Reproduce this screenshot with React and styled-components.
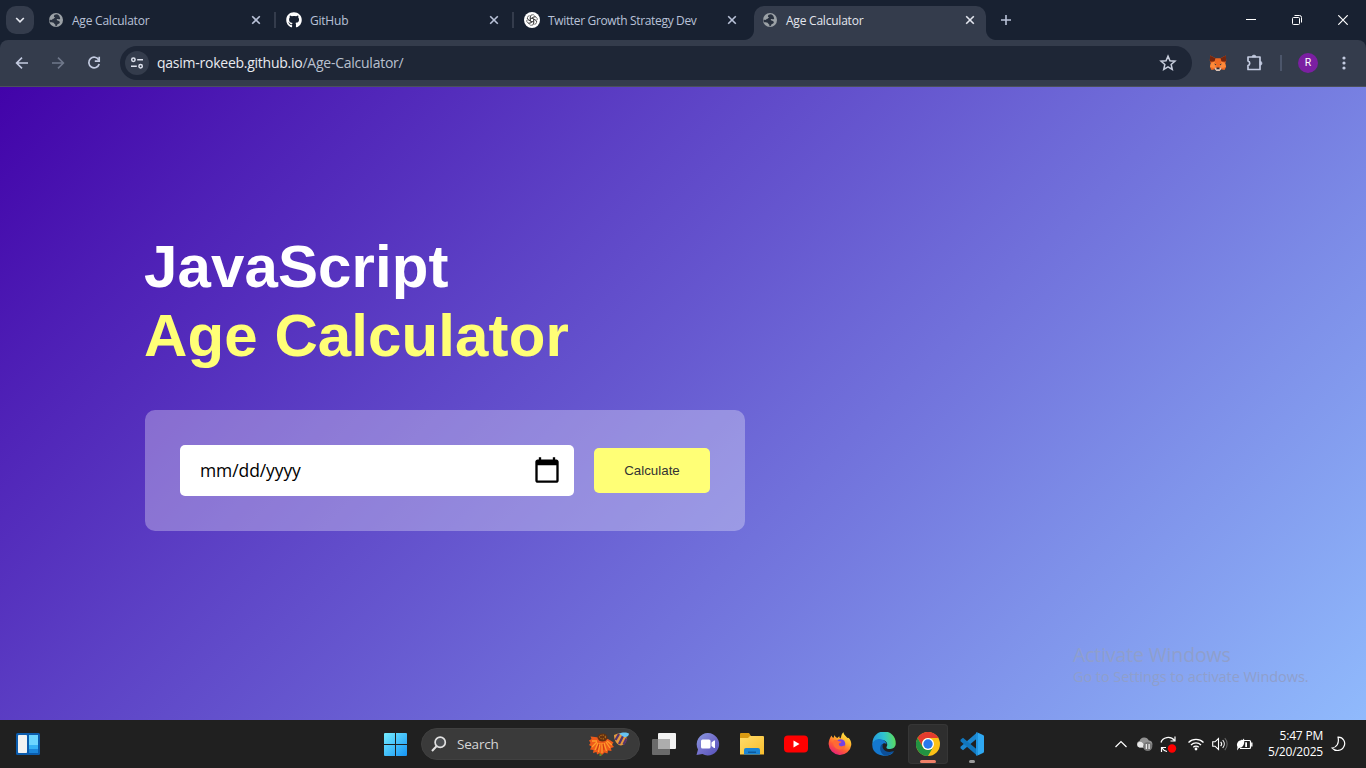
import React from "react";
import styled, { createGlobalStyle } from "styled-components";
import { FaGithub } from "react-icons/fa";

const ui = `"Open Sans", "Noto Sans", sans-serif`;

const GlobalStyle = createGlobalStyle`
  * { box-sizing: border-box; }
  body { margin: 0; overflow: hidden; background: #182131; }
  svg { display: block; flex: none; }
`;

const Screen = styled.div`
  width: 1366px;
  height: 768px;
  display: flex;
  flex-direction: column;
  overflow: hidden;
`;

/* ---------- browser chrome ---------- */

const TabStrip = styled.div`
  height: 40px;
  flex: none;
  display: flex;
  align-items: flex-start;
  padding-left: 6px;
  background: #182131;
  font-family: ${ui};
`;

const TabSearch = styled.div`
  width: 28px;
  height: 28px;
  margin: 6px 6px 0 0;
  border-radius: 10px;
  background: #343c4c;
  display: grid;
  place-items: center;
`;

const Tab = styled.div`
  position: relative;
  width: 232px;
  height: 34px;
  margin: 6px 6px 0 0;
  padding: 0 10px 6px 8px;
  display: flex;
  align-items: center;
  gap: 8px;
  border-radius: 10px 10px 0 0;
  color: ${(p) => (p.$active ? "#e3e6ee" : "#b9c2d8")};
  background: ${(p) => (p.$active ? "#343c4c" : "transparent")};

  &::before,
  &::after {
    content: "";
    display: ${(p) => (p.$active ? "block" : "none")};
    position: absolute;
    bottom: 0;
    width: 10px;
    height: 10px;
  }
  &::before {
    left: -10px;
    background: radial-gradient(circle at 0 0, transparent 9.5px, #343c4c 10.5px);
  }
  &::after {
    right: -10px;
    background: radial-gradient(circle at 100% 0, transparent 9.5px, #343c4c 10.5px);
  }
`;

const TabTitle = styled.span`
  flex: 1;
  font-size: 12px;
  line-height: 16px;
  white-space: nowrap;
  letter-spacing: ${(p) => p.$track || "-0.22px"};
  padding-top: 1px;
`;

const TabDivider = styled.div`
  width: 2px;
  height: 16px;
  margin: 12px 2px 0 -4px;
  background: #343c4c;
`;

const NewTab = styled.div`
  width: 28px;
  height: 28px;
  margin-top: 6px;
  display: grid;
  place-items: center;
`;

const WindowButtons = styled.div`
  margin-left: auto;
  display: flex;
`;

const WindowButton = styled.div`
  width: 46px;
  height: 40px;
  display: grid;
  place-items: center;
`;

const Toolbar = styled.div`
  height: 47px;
  flex: none;
  display: flex;
  align-items: center;
  padding: 0 4px;
  background: #343c4c;
  border-radius: 8px 8px 0 0;
  border-bottom: 1px solid #4b505b;
  font-family: ${ui};
`;

const ToolButton = styled.div`
  width: 36px;
  height: 34px;
  flex: none;
  display: grid;
  place-items: center;
`;

const Omnibox = styled.div`
  width: 1072px;
  height: 34px;
  flex: none;
  margin: 0 8px;
  padding: 0 15px 0 5px;
  display: flex;
  align-items: center;
  border-radius: 17px;
  background: #1e2636;
`;

const SiteInfo = styled.div`
  width: 24px;
  height: 24px;
  margin-right: 8px;
  border-radius: 50%;
  background: #343c4c;
  display: grid;
  place-items: center;
`;

const Url = styled.span`
  flex: 1;
  font-size: 14px;
  line-height: 20px;
  letter-spacing: -0.25px;
  color: #e8eaf0;
`;

const UrlPath = styled.span`
  color: #b9c0cf;
`;

const ToolDivider = styled.div`
  width: 2px;
  height: 16px;
  margin: 0 8px;
  background: #4c566b;
`;

const Avatar = styled.div`
  width: 20px;
  height: 20px;
  border-radius: 50%;
  background: #7b1fa2;
  color: #fff;
  font: 10.5px/20px Roboto, sans-serif;
  text-align: center;
`;

/* ---------- page ---------- */

const Page = styled.main`
  position: relative;
  flex: 1;
  padding: 145px 0 0 145px;
  background: linear-gradient(135deg, #4203a9, #90bafc);
  font-family: "Liberation Sans", Arial, sans-serif;
`;

const Heading = styled.h1`
  margin: 0 0 0 -1px;
  font-size: 60px;
  line-height: 69px;
  font-weight: 700;
  letter-spacing: 0.1px;
  color: #fff;
  white-space: nowrap;
`;

const Accent = styled.span`
  display: block;
  color: #ffff76;
`;

const InputBox = styled.div`
  width: 600px;
  height: 121px;
  margin-top: 40px;
  padding: 35px;
  display: flex;
  align-items: center;
  gap: 20px;
  border-radius: 10px;
  background: rgba(255, 255, 255, 0.3);
`;

const DateField = styled.div`
  flex: 1;
  height: 51px;
  padding: 0 13px 0 20px;
  display: flex;
  align-items: center;
  justify-content: space-between;
  border-radius: 5px;
  background: #fff;
  color: #000;
  font-family: ${ui};
  font-size: 17.5px;
`;

const DateText = styled.span`
  padding-bottom: 2px;
  letter-spacing: -0.1px;
`;

const PickerIcon = styled.span`
  padding-bottom: 2px;
`;

const CalculateButton = styled.button`
  width: 116px;
  height: 45px;
  padding: 0;
  border: 0;
  border-radius: 5px;
  background: #ffff76;
  color: #333;
  font: 13.333px "Liberation Sans", Arial, sans-serif;
`;

const Watermark = styled.div`
  position: absolute;
  left: 1073px;
  top: 555px;
  color: #8f9fcc;
  font-family: ${ui};
  white-space: nowrap;
`;

const WatermarkTitle = styled.div`
  font-size: 19.5px;
  line-height: 26px;
  letter-spacing: -0.15px;
`;

const WatermarkNote = styled.div`
  font-size: 14.5px;
  line-height: 17px;
  letter-spacing: -0.06px;
`;

/* ---------- taskbar ---------- */

const Taskbar = styled.footer`
  height: 48px;
  flex: none;
  display: flex;
  align-items: center;
  background: #202020;
  font-family: ${ui};
`;

const Widgets = styled.div`
  width: 375px;
  padding-left: 16px;
`;

const AppButton = styled.div`
  position: relative;
  width: 40px;
  height: 40px;
  margin-right: 4px;
  display: grid;
  place-items: center;
  border-radius: 4px;
  background: ${(p) => (p.$active ? "#2e2e2e" : "transparent")};
  box-shadow: ${(p) => (p.$active ? "inset 0 0 0 1px #363636" : "none")};

  &::after {
    content: "";
    display: ${(p) => (p.$bar ? "block" : "none")};
    position: absolute;
    bottom: 1px;
    left: calc(50% - ${(p) => (p.$bar || 0) / 2}px);
    width: ${(p) => p.$bar || 0}px;
    height: 3px;
    border-radius: 2px;
    background: ${(p) => (p.$active ? "#f08068" : "#9a9a9a")};
  }
`;

const SearchBox = styled.div`
  width: 219px;
  height: 32px;
  margin: 0 4px 0 2px;
  padding: 0 9px 0 9px;
  display: flex;
  align-items: center;
  border-radius: 16px;
  background: #3a3a3a;
  border: 1px solid #404040;
  color: #d6d6d6;
  font-size: 13.5px;
`;

const SearchLabel = styled.span`
  flex: 1;
  margin-left: 10px;
  padding-bottom: 1px;
  letter-spacing: -0.2px;
`;

const Tray = styled.div`
  margin-left: auto;
  display: flex;
  align-items: center;
  padding-right: 20px;
`;

const TrayIcon = styled.div`
  width: ${(p) => p.$w}px;
  display: grid;
  place-items: center;
`;

const Clock = styled.div`
  width: 64px;
  margin-right: 8px;
  color: #fff;
  font-size: 12px;
  line-height: 16px;
  letter-spacing: -0.2px;
  text-align: right;
  white-space: nowrap;
`;

/* ---------- icons ---------- */

const Globe = () => (
  <svg width="16" height="16" viewBox="0 0 16 16">
    <circle cx="8" cy="8" r="7" fill="#9ba1a6" />
    <path
      d="M8.800 2.200C7.300 2.200 5.800 3.100 5.900 4.400c.1.900 1.300.9 1.200 1.500-.1.800-1.500.5-2.100.9-.8.500-.9 1.200-1.800 1.200-.6 0-1.100-.4-1.700-.5-.1 1.100.1 2 .5 2.700 1 .2 2.300 0 3.200.4.900.4.8 1.300 1.600 1.700.8.300.7 1 .5 1.900 1.200.1 1.900-.6 2-1.500.1-1 1.300-.9 1.900-1.300.7-.500.8-1.300.3-1.900-.7-.8-2-.8-2.600-1.500-.5-.7.100-1.100.9-1.100 1 0 1.700.5 2.400.1C12.200 5.800 11.200 2.500 8.800 2.200z"
      fill="#29313f"
    />
  </svg>
);

const GptMark = () => (
  <svg width="16" height="16" viewBox="0 0 16 16">
    <circle cx="8" cy="8" r="8" fill="#fff" />
    <g fill="none" stroke="#333" strokeWidth=".65">
      {[0, 60, 120, 180, 240, 300].map((a) => (
        <path key={a} transform={`rotate(${a} 8 8)`} d="M6.400 9V5a2.300 2.300 0 0 1 4.200-1.300M6.400 6.900l3.400-2a2.300 2.300 0 0 1 2.200 0" />
      ))}
    </g>
  </svg>
);

const Cross = ({ color }) => (
  <svg width="12" height="12" viewBox="0 0 12 12" stroke={color} strokeWidth="1.6">
    <path d="M2.200 2.200l7.600 7.600M9.800 2.200l-7.600 7.600" />
  </svg>
);

const ArrowLeft = ({ color, flip }) => (
  <svg width="16" height="16" viewBox="0 0 16 16" fill="none" stroke={color} strokeWidth="1.6" transform={flip ? "scale(-1 1)" : undefined}>
    <path d="M14 8H3M8 2.600L2.600 8L8 13.400" />
  </svg>
);

const Reload = () => (
  <svg width="16" height="16" viewBox="0 0 16 16" fill="none" stroke="#c3cbe0" strokeWidth="1.7">
    <path d="M12.800 5A5.300 5.300 0 1 0 13.200 9" />
    <path d="M13.200 1.800V6.200H8.800" />
  </svg>
);

const Tune = () => (
  <svg width="14" height="14" viewBox="0 0 14 14" fill="none" stroke="#dfe3ee" strokeWidth="1.5">
    <circle cx="3.4" cy="3.8" r="1.7" />
    <path d="M7.200 3.800H13M1 10.200H6.800" />
    <circle cx="10.6" cy="10.2" r="1.7" />
  </svg>
);

const Star = () => (
  <svg width="18" height="18" viewBox="0 0 24 24" fill="none" stroke="#c8cedd" strokeWidth="2">
    <path d="M12 2.800l2.600 6.200 6.700.6-5.100 4.400 1.500 6.500L12 17.100l-5.700 3.400 1.500-6.500-5.100-4.400 6.700-.6z" />
  </svg>
);

const Fox = () => (
  <svg width="18" height="18" viewBox="0 0 18 18">
    <path d="M1.200 1.500l5.300 2.800h5l5.300-2.800.4 5-1 3 .8 3.500-1.500 3-3.500-.8-1.500 1.800h-3L6 15.200l-3.500.8L1 13l.8-3.500-1-3z" fill="#f06a22" />
    <path d="M1.200 1.500L6.500 4.300 5.500 7.500 1.500 7.800.8 6.500zM16.800 1.500L11.500 4.300l1 3.200 4 .3.700-1.300z" fill="#74260f" />
    <path d="M1.800 9.500L5.500 7.500 7.500 12 4.500 14 1 13zM16.200 9.500L12.500 7.500 10.500 12l3 2 3.500-1z" fill="#ff8a3a" />
    <path d="M5 9.600l2.200.7-.4 1.200zM13 9.600l-2.200.7.4 1.200z" fill="#2f3440" />
    <path d="M5.500 13.200L7.500 14h3l2-.8-.6 2.300-1.400 1.400h-3l-1.400-1.400z" fill="#d8c6bb" />
    <path d="M7.700 13.600h2.600l.3 1.600H7.400z" fill="#2d2833" />
  </svg>
);

const Puzzle = () => (
  <svg width="20" height="20" viewBox="0 0 20 20" fill="none" stroke="#c3cbe0" strokeWidth="1.7" strokeLinejoin="round">
    <path d="M4 4H16V16.500H4V12.600A2.400 2.400 0 0 0 4 8z" />
    <path d="M8 4a2 2 0 0 1 4 0zM16 8.300a2 2 0 0 1 0 4z" fill="#c3cbe0" strokeWidth=".6" />
  </svg>
);

const Calendar = () => (
  <svg width="28" height="28" viewBox="0 0 24 24" fill="#000">
    <path d="M20 3h-1V1h-2v2H7V1H5v2H4c-1.100 0-2 .9-2 2v16c0 1.100.9 2 2 2h16c1.100 0 2-.9 2-2V5c0-1.100-.9-2-2-2zm0 18H4V8h16v13z" />
  </svg>
);

const WidgetsIcon = () => (
  <svg width="24" height="22" viewBox="0 0 24 22">
    <rect width="24" height="22" rx="1.5" fill="#0b5cad" />
    <rect x="2" y="2" width="9" height="18" rx=".8" fill="#f2f2f2" />
    <rect x="13" y="2" width="9" height="10" fill="#6cd5ff" />
    <rect x="13" y="12" width="9" height="4" fill="#35b1f5" />
    <rect x="13" y="16" width="9" height="4" fill="#1b86dc" />
  </svg>
);

const StartIcon = () => (
  <svg width="23" height="23" viewBox="0 0 23 23">
    <defs>
      <linearGradient id="win" x1="0" y1="0" x2="23" y2="23" gradientUnits="userSpaceOnUse">
        <stop stopColor="#74ecff" />
        <stop offset="1" stopColor="#1594f5" />
      </linearGradient>
    </defs>
    <path d="M1 0h10v11H0V1a1 1 0 0 1 1-1zM12 0h10a1 1 0 0 1 1 1v10H12zM0 12h11v11H1a1 1 0 0 1-1-1zM12 12h11v10a1 1 0 0 1-1 1H12z" fill="url(#win)" />
  </svg>
);

const Magnifier = () => (
  <svg width="16" height="16" viewBox="0 0 16 16" fill="none" stroke="#e2e2e2" strokeWidth="1.7">
    <circle cx="9.2" cy="6.3" r="5.1" fill="#4c4f52" />
    <path d="M5.500 10.200L1 15" strokeWidth="2" />
  </svg>
);

const Flower = () => (
  <svg width="42" height="24" viewBox="0 0 42 24">
    <path d="M12.500 17v7" stroke="#5f8a26" strokeWidth="2" />
    <path
      d="M7 5L2.500 4.500 3.500 7 1 8.500 2.500 11 1 13 3.500 14.500 2 17.500 5.500 18 5 21 8.500 20 9 22.500 12 21 14 23 16.500 20.500 19.500 21.500 20 18.500 23.500 19 23 16 26 15 24 12.500 25.500 10.500 22.500 8.500 20 7z"
      fill="#ee5a1a"
    />
    <path d="M9 9l-5 0M9 10l-5 5M10 11l-3 7M12 11l-1.500 9M14 11v10M16 11l2.500 8M18 10l4 6M19 9l5 4" stroke="#ff9d2a" strokeWidth="1.3" />
    <path d="M11 12l-2 6M15 12l1 6" stroke="#c52f12" strokeWidth=".8" />
    <ellipse cx="14.5" cy="5.5" rx="5" ry="4" fill="#65300f" />
    <ellipse cx="14.5" cy="5" rx="3" ry="1.9" fill="none" stroke="#b6731d" strokeWidth="1.1" strokeDasharray="1.3 1" />
    <path d="M26 3c4-2.500 9-2 12 1 2 4.500-1 8.500-5 9.500-4-.5-7-5-7-10.500z" fill="#e69a3e" />
    <path d="M27.500 8l3.500-6M31 12l4.500-9M35.500 12.500l3-6" stroke="#53346e" strokeWidth="2.3" />
    <path d="M31 1.500C34 0 39 0 41 1.500 41 4.500 38 6 35 4.500z" fill="#67c3f2" />
  </svg>
);

const TaskView = () => (
  <svg width="24" height="24" viewBox="0 0 24 24">
    <rect x="6" y="1" width="18" height="16" rx="1" fill="#f2f2f2" />
    <rect x="0" y="7" width="18" height="16" rx="1" fill="#6a6a6a" />
    <path d="M6 7h12v10H6z" fill="#adadad" />
  </svg>
);

const Chat = () => (
  <svg width="24" height="24" viewBox="0 0 24 24">
    <defs>
      <linearGradient id="chat" x1="0" y1="0" x2="1" y2="1">
        <stop stopColor="#8a9ade" />
        <stop offset=".5" stopColor="#7470cc" />
        <stop offset="1" stopColor="#5350b8" />
      </linearGradient>
    </defs>
    <path d="M12 1a11.200 11.200 0 1 1-5.500 21L.5 23l1.500-5.500A11.200 11.200 0 0 1 12 1z" fill="url(#chat)" />
    <rect x="5" y="7.500" width="9.500" height="9" rx="1.5" fill="#fff" />
    <path d="M15.500 10.500l2.500-2h1v7.500h-1l-2.500-2z" fill="#fff" />
  </svg>
);

const Folder = () => (
  <svg width="24" height="24" viewBox="0 0 24 24">
    <defs>
      <linearGradient id="folder" x1="0" y1="0" x2="1" y2="1">
        <stop stopColor="#ffdc6b" />
        <stop offset="1" stopColor="#f8bd2d" />
      </linearGradient>
    </defs>
    <path d="M0 2a1 1 0 0 1 1-1h8l2 3v5H0z" fill="#d99a12" />
    <path d="M0 6h8l2-2h13a1 1 0 0 1 1 1v17.500H0z" fill="url(#folder)" />
    <path d="M4 22.500V18a2 2 0 0 1 2-2h12a2 2 0 0 1 2 2v4.500z" fill="#1a84d4" />
    <path d="M8 19.500h8v1.500H8z" fill="#0c5a9e" />
  </svg>
);

const YouTube = () => (
  <svg width="24" height="18" viewBox="0 0 24 18">
    <rect y=".5" width="24" height="17" rx="4" fill="#f00" />
    <path d="M9.500 5.400v7.200L15.500 9z" fill="#fff" />
  </svg>
);

const Firefox = () => (
  <svg width="24" height="24" viewBox="0 0 24 24">
    <defs>
      <linearGradient id="ff" x1=".8" y1="0" x2=".2" y2="1">
        <stop stopColor="#fff04a" />
        <stop offset=".35" stopColor="#ffb02c" />
        <stop offset=".65" stopColor="#ff5a36" />
        <stop offset="1" stopColor="#e31587" />
      </linearGradient>
    </defs>
    <path d="M3.500 3.500c.3 1 .7 1.700 1.500 2.300l.8-.3.500-2.500C6.800 4.500 8 5.300 9.500 6c.3-.9 1.300-1.600 2-1.800-.3 1 0 1.800 1 2.300C13.700 4.500 13 2 15.500.300c0 2 1.500 3.200 3 4.700.8.900 1.500 1.200 2 .7C22.500 7.500 23.500 10 23.300 13A11.400 11.400 0 0 1 .600 12C.7 9 1.800 6 3.500 3.500z" fill="url(#ff)" />
    <circle cx="12.5" cy="12" r="4.8" fill="#7542e5" />
    <path d="M5.500 8.500c2-.9 4-.5 5.500.8l2.500.3c0 1-1.500 1.500-2.500 2-.8 1.800 1 3.200 3 2.700 1.500-.3 2.600-1 3.500-.6-.9 3-4 4.300-7 3.600-4.500-1-6-5-5-8.800z" fill="#ff6a35" />
  </svg>
);

const Edge = () => (
  <svg width="24" height="24" viewBox="0 0 24 24">
    <defs>
      <linearGradient id="edgeTop" x1="0" y1=".5" x2="1" y2=".4">
        <stop stopColor="#2499de" />
        <stop offset=".5" stopColor="#2fc3d0" />
        <stop offset="1" stopColor="#5cdc5a" />
      </linearGradient>
    </defs>
    <path d="M.500 11A11.600 11.600 0 0 1 23.700 11c.3 3.500-2 6-5.500 6-3 0-4.200-1-3.600-2.200 2-3.800-1-6.800-4.800-6.800C5 8 1.500 10 .500 14z" fill="url(#edgeTop)" />
    <path d="M.400 13C1 8.500 5 6.500 9 7.200c3.500.6 5.500 3 5.600 5.300-.8-1.100-2-1.500-3.200-1-3 1.500-3 6.500 1 9 2.500 1.500 5 1.600 9.500-1-2.500 4-7.800 5.200-12.500 3.800C3.500 22 0 18 .400 13z" fill="#1478cf" />
    <path d="M9.500 12.500c-2.500 3-1.500 8.500 3 11 3.500.3 7-1.200 9.800-4.800-3 1.500-7.300 1.800-9.800-.4-1.800-1.600-2.400-3.700-1.600-5.800z" fill="#0c4f98" />
  </svg>
);

const Chrome = () => (
  <svg width="24" height="24" viewBox="0 0 24 24">
    <circle cx="12" cy="12" r="12" fill="#fbc116" />
    <path d="M1.600 6A12 12 0 0 1 22.400 6H12a6 6 0 0 0-5.200 9z" fill="#e33b2e" />
    <path d="M1.600 6l5.200 9a6 6 0 0 0 10.400 0L12 24A12 12 0 0 1 1.600 6z" fill="#229342" />
    <circle cx="12" cy="12" r="6" fill="#fff" />
    <circle cx="12" cy="12" r="4.7" fill="#2878ec" />
  </svg>
);

const VsCode = () => (
  <svg width="24" height="24" viewBox="0 0 24 24">
    <path d="M17 .5v6L3 18.300.500 16.300v-1.600z" fill="#1c86cf" />
    <path d="M17 23.500v-6L3 5.700.500 7.700v1.600z" fill="#1176bd" />
    <path d="M17 .3l6 2.600c.6.300 1 .8 1 1.500v15.200c0 .7-.4 1.200-1 1.500l-6 2.600c.6-.6 1-.9 1-1.700V2c0-.8-.4-1.200-1-1.700z" fill="#2fa8f2" />
    <path d="M17 .3c.6.500 1 .9 1 1.700v20c0 .8-.4 1.100-1 1.700-.5 0-1-.4-1-1V1.300c0-.6.500-1 1-1z" fill="#1e93de" />
  </svg>
);

const Chevron = () => (
  <svg width="12" height="8" viewBox="0 0 12 8" fill="none" stroke="#fff" strokeWidth="1.2">
    <path d="M.500 7L6 1.500 11.500 7" />
  </svg>
);

const Cloud = () => (
  <svg width="17" height="16" viewBox="0 0 17 16">
    <path d="M4 11.500A3.300 3.300 0 0 1 3.500 5 5 5 0 0 1 12.800 4.500 3.600 3.600 0 0 1 14 11.500z" fill="#929292" />
    <path d="M3.500 11.500A3 3 0 0 1 3.500 5.700C6 5.500 8 7.500 9 11.500z" fill="#e8e8e8" />
    <circle cx="11.7" cy="10.5" r="4.6" fill="#777" />
    <path d="M10.300 8v5M13.100 8v5" stroke="#fff" strokeWidth="1.1" />
  </svg>
);

const Sync = () => (
  <svg width="17" height="17" viewBox="0 0 17 17" fill="none" stroke="#fff" strokeWidth="1.2">
    <path d="M1 6.500C2.500 1 10.500-.5 14.500 4.500M15 .5V5h-4.500M7 15.500C5 15 3 13.700 2 12M1.500 16V11.500H6" />
    <circle cx="12" cy="12.5" r="4.2" fill="#f00" stroke="none" />
  </svg>
);

const Wifi = () => (
  <svg width="16" height="14" viewBox="0 0 16 14" fill="none" stroke="#fff" strokeWidth="1.3">
    <path d="M.500 5.500a10.600 10.600 0 0 1 15 0M3 8a7.100 7.100 0 0 1 10 0M5.300 10.300a3.800 3.800 0 0 1 5.400 0" />
    <circle cx="8" cy="12" r="1.4" fill="#fff" stroke="none" />
  </svg>
);

const Speaker = () => (
  <svg width="16" height="14" viewBox="0 0 16 14" fill="none" stroke="#fff" strokeWidth="1.1">
    <path d="M.700 4.800H3L6.500 1.500v11L3 9.200H.700zM8.700 4.800a3.300 3.300 0 0 1 0 4.400M10.700 3a6 6 0 0 1 0 8" />
    <path d="M12.800 1a8.800 8.800 0 0 1 0 12" stroke="#666" />
  </svg>
);

const Battery = () => (
  <svg width="17" height="13" viewBox="0 0 17 13">
    <path d="M6 2.500h7.500a1 1 0 0 1 1 1v6a1 1 0 0 1-1 1H4" fill="none" stroke="#fff" strokeWidth="1.2" />
    <path d="M15.800 4.500v4" stroke="#fff" strokeWidth="1.4" />
    <path d="M9.200 4.300h1.800v4.600H9.200z" fill="#fff" />
    <path d="M8 .5C9 5.500 7.500 10 3 10L1 12.500 1.500 9C-.5 5.500 3 2 4.500 2.500L5.500 1.500 6 2.500z" fill="#fff" />
  </svg>
);

const Moon = () => (
  <svg width="15" height="16" viewBox="0 0 15 16" fill="none" stroke="#fff" strokeWidth="1.2">
    <path d="M7 1.200c5.500-.2 8 5.300 5.900 9.300-2.200 4.700-8.500 5.300-11.700 1.500C5.500 11.300 8.500 7.500 7 1.200z" />
  </svg>
);

/* ---------- screen ---------- */

const tabs = [
  { title: "Age Calculator", icon: <Globe /> },
  { title: "GitHub", icon: <FaGithub size={16} color="#fff" /> },
  { title: "Twitter Growth Strategy Dev", icon: <GptMark />, track: "-0.34px" },
  { title: "Age Calculator", icon: <Globe />, active: true },
];

const apps = [
  { name: "tasks", icon: <TaskView /> },
  { name: "chat", icon: <Chat /> },
  { name: "files", icon: <Folder /> },
  { name: "youtube", icon: <YouTube /> },
  { name: "firefox", icon: <Firefox /> },
  { name: "edge", icon: <Edge /> },
  { name: "chrome", icon: <Chrome />, active: true, bar: 16 },
  { name: "code", icon: <VsCode />, bar: 6 },
];

export default function App() {
  return (
    <Screen>
      <GlobalStyle />
      <TabStrip>
        <TabSearch>
          <svg width="10" height="8" viewBox="0 0 10 8" fill="none" stroke="#e3e6ee" strokeWidth="1.7">
            <path d="M1.200 2L5 5.800 8.800 2" />
          </svg>
        </TabSearch>
        {tabs.map((tab, i) => (
          <React.Fragment key={i}>
            <Tab $active={tab.active}>
              {tab.icon}
              <TabTitle $track={tab.track}>{tab.title}</TabTitle>
              <Cross color={tab.active ? "#e3e6ee" : "#b9c2d8"} />
            </Tab>
            {i < 2 && <TabDivider />}
          </React.Fragment>
        ))}
        <NewTab>
          <svg width="12" height="12" viewBox="0 0 12 12" stroke="#b9c2d8" strokeWidth="1.6">
            <path d="M6 1v10M1 6h10" />
          </svg>
        </NewTab>
        <WindowButtons>
          <WindowButton>
            <svg width="10" height="10" viewBox="0 0 10 10">
              <path d="M0 4h10v1H0z" fill="#fff" />
            </svg>
          </WindowButton>
          <WindowButton>
            <svg width="10" height="10" viewBox="0 0 10 10" fill="none" stroke="#fff">
              <rect x=".5" y="2.5" width="7" height="7" rx="1" />
              <path d="M2.500.500H7.500a2 2 0 0 1 2 2V7.500" />
            </svg>
          </WindowButton>
          <WindowButton>
            <svg width="10" height="10" viewBox="0 0 10 10" stroke="#fff" strokeWidth="1.2">
              <path d="M.3.300l9.400 9.400M9.700.300L.3 9.700" />
            </svg>
          </WindowButton>
        </WindowButtons>
      </TabStrip>

      <Toolbar>
        <ToolButton><ArrowLeft color="#c3cbe0" /></ToolButton>
        <ToolButton><ArrowLeft color="#6f788a" flip /></ToolButton>
        <ToolButton><Reload /></ToolButton>
        <Omnibox>
          <SiteInfo><Tune /></SiteInfo>
          <Url>
            qasim-rokeeb.github.io<UrlPath>/Age-Calculator/</UrlPath>
          </Url>
          <Star />
        </Omnibox>
        <ToolButton><Fox /></ToolButton>
        <ToolButton><Puzzle /></ToolButton>
        <ToolDivider />
        <ToolButton><Avatar>R</Avatar></ToolButton>
        <ToolButton>
          <svg width="4" height="16" viewBox="0 0 4 16" fill="#c3cbe0">
            <circle cx="2" cy="3" r="1.6" />
            <circle cx="2" cy="8" r="1.6" />
            <circle cx="2" cy="13" r="1.6" />
          </svg>
        </ToolButton>
      </Toolbar>

      <Page>
        <Heading>
          JavaScript
          <Accent>Age Calculator</Accent>
        </Heading>
        <InputBox>
          <DateField>
            <DateText>mm/dd/yyyy</DateText>
            <PickerIcon><Calendar /></PickerIcon>
          </DateField>
          <CalculateButton>Calculate</CalculateButton>
        </InputBox>
        <Watermark>
          <WatermarkTitle>Activate Windows</WatermarkTitle>
          <WatermarkNote>Go to Settings to activate Windows.</WatermarkNote>
        </Watermark>
      </Page>

      <Taskbar>
        <Widgets><WidgetsIcon /></Widgets>
        <AppButton><StartIcon /></AppButton>
        <SearchBox>
          <Magnifier />
          <SearchLabel>Search</SearchLabel>
          <Flower />
        </SearchBox>
        {apps.map((app) => (
          <AppButton key={app.name} $active={app.active} $bar={app.bar}>
            {app.icon}
          </AppButton>
        ))}
        <Tray>
          <TrayIcon $w={26}><Chevron /></TrayIcon>
          <TrayIcon $w={20}><Cloud /></TrayIcon>
          <TrayIcon $w={29}><Sync /></TrayIcon>
          <TrayIcon $w={26}><Wifi /></TrayIcon>
          <TrayIcon $w={21}><Speaker /></TrayIcon>
          <TrayIcon $w={29}><Battery /></TrayIcon>
          <Clock>
            5:47 PM
            <br />
            5/20/2025
          </Clock>
          <Moon />
        </Tray>
      </Taskbar>
    </Screen>
  );
}
